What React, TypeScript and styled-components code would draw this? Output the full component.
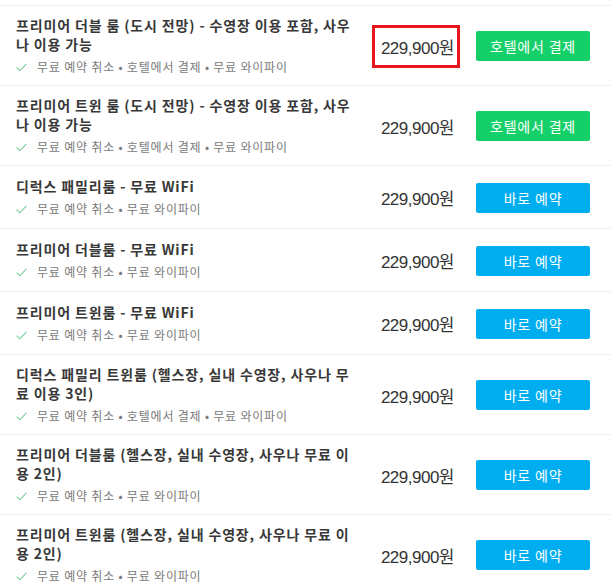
import styled, { createGlobalStyle } from 'styled-components'

interface Room {
  name: string;
  features: string[];
  price: string;
  payAtHotel: boolean;
  marked?: boolean;
}

const rooms: Room[] = [
  {
    name: '프리미어 더블 룸 (도시 전망) - 수영장 이용 포함, 사우나 이용 가능',
    features: ['무료 예약 취소', '호텔에서 결제', '무료 와이파이'],
    price: '229,900원',
    payAtHotel: true,
    marked: true,
  },
  {
    name: '프리미어 트윈 룸 (도시 전망) - 수영장 이용 포함, 사우나 이용 가능',
    features: ['무료 예약 취소', '호텔에서 결제', '무료 와이파이'],
    price: '229,900원',
    payAtHotel: true,
  },
  {
    name: '디럭스 패밀리룸 - 무료 WiFi',
    features: ['무료 예약 취소', '무료 와이파이'],
    price: '229,900원',
    payAtHotel: false,
  },
  {
    name: '프리미어 더블룸 - 무료 WiFi',
    features: ['무료 예약 취소', '무료 와이파이'],
    price: '229,900원',
    payAtHotel: false,
  },
  {
    name: '프리미어 트윈룸 - 무료 WiFi',
    features: ['무료 예약 취소', '무료 와이파이'],
    price: '229,900원',
    payAtHotel: false,
  },
  {
    name: '디럭스 패밀리 트윈룸 (헬스장, 실내 수영장, 사우나 무료 이용 3인)',
    features: ['무료 예약 취소', '호텔에서 결제', '무료 와이파이'],
    price: '229,900원',
    payAtHotel: false,
  },
  {
    name: '프리미어 더블룸 (헬스장, 실내 수영장, 사우나 무료 이용 2인)',
    features: ['무료 예약 취소', '무료 와이파이'],
    price: '229,900원',
    payAtHotel: false,
  },
  {
    name: '프리미어 트윈룸 (헬스장, 실내 수영장, 사우나 무료 이용 2인)',
    features: ['무료 예약 취소', '무료 와이파이'],
    price: '229,900원',
    payAtHotel: false,
  },
]

// check mark
function CheckIcon() {
  return (
    <svg width="11" height="9" viewBox="0 0 11 9" fill="none">
      <polyline points="0.6,4.6 3.8,7.8 10.4,0.8" stroke="#74cf93" strokeWidth="1.1" />
    </svg>
  )
}

export default function App() {
  return (
    <>
      <GlobalStyle />
      <RoomList>
        {rooms.map((room, i) => (
          <RoomRow key={i}>
            <RoomInfo>
              <RoomName>{room.name}</RoomName>
              <Features>
                <CheckIcon />
                <span>{room.features.join(' • ')}</span>
              </Features>
            </RoomInfo>
            <Price $marked={room.marked}>{room.price}</Price>
            <BookButton $payAtHotel={room.payAtHotel}>
              {room.payAtHotel ? '호텔에서 결제' : '바로 예약'}
            </BookButton>
          </RoomRow>
        ))}
      </RoomList>
    </>
  )
}

// styles
const GlobalStyle = createGlobalStyle`
  html, body {
    margin: 0;
    padding: 0;
    background: #fff;
    overflow: hidden;
  }
  body {
    font-family: "Noto Sans CJK KR", "Noto Sans", sans-serif;
    color: #333;
  }
`

const RoomList = styled.div`
  padding-top: 5px;
`

const RoomRow = styled.div`
  display: grid;
  grid-template-columns: 1fr 88px 114px;
  column-gap: 16px;
  align-items: center;
  padding: 10px 21px 9px 16px;
  border-top: 1px solid #efefef;
`

const RoomInfo = styled.div`
  display: flex;
  flex-direction: column;
  gap: 4px;
  min-width: 0;
`

const RoomName = styled.div`
  font-size: 14px;
  font-weight: 700;
  line-height: 19px;
  letter-spacing: 0.85px;
  color: #383838;
`

const Features = styled.div`
  display: flex;
  align-items: center;
  gap: 10px;
  font-size: 12px;
  line-height: 18px;
  letter-spacing: 0.8px;
  color: #7a7a7a;

  svg {
    flex-shrink: 0;
  }
`

const Price = styled.div<{ $marked?: boolean }>`
  box-sizing: border-box;
  height: 43px;
  display: flex;
  align-items: center;
  justify-content: flex-end;
  padding-right: 3px;
  border: 3px solid ${(p) => (p.$marked ? '#e8141c' : 'transparent')};
  font-family: "Liberation Sans", "Noto Sans CJK KR", sans-serif;
  font-size: 17px;
  letter-spacing: -0.5px;
  color: #333;
`

const BookButton = styled.button<{ $payAtHotel?: boolean }>`
  height: 30px;
  width: 114px;
  border: none;
  border-radius: 2px;
  background-color: ${(p) => (p.$payAtHotel ? '#15cf69' : '#00aeef')};
  color: #fff;
  font-family: "Noto Sans CJK KR", sans-serif;
  font-size: 14px;
  letter-spacing: 0.8px;
  cursor: pointer;
  padding: 0;
`
